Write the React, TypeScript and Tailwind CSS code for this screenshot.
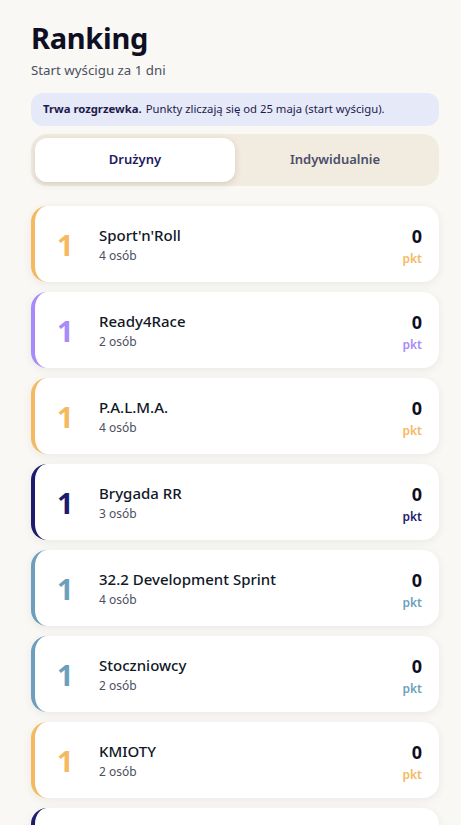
import React from "react";

type Team = { name: string; count: number; color: string };

const teams: Team[] = [
  { name: "Sport'n'Roll", count: 4, color: "orange" },
  { name: "Ready4Race", count: 2, color: "purple" },
  { name: "P.A.L.M.A.", count: 4, color: "orange" },
  { name: "Brygada RR", count: 3, color: "navy" },
  { name: "32.2 Development Sprint", count: 4, color: "steel" },
  { name: "Stoczniowcy", count: 2, color: "steel" },
  { name: "KMIOTY", count: 2, color: "orange" },
];

const styles: Record<string, { border: string; text: string }> = {
  orange: { border: "border-l-[#f5b961]", text: "text-[#f5b961]" },
  purple: { border: "border-l-[#a78bfa]", text: "text-[#a78bfa]" },
  navy: { border: "border-l-[#1e1b6e]", text: "text-[#1e1b6e]" },
  steel: { border: "border-l-[#6d9fbd]", text: "text-[#6d9fbd]" },
};

export default function App() {
  return (
    <div
      className="h-[825px] overflow-hidden bg-[#f9f8f5] pl-[31px] pr-[22px] pt-[18px]"
      style={{ fontFamily: '"Noto Sans", "Open Sans", sans-serif' }}
    >
      <h1 className="text-[29px] font-bold leading-[40px] text-[#0f0f23] tracking-[-0.3px]">Ranking</h1>
      <p className="mt-[3px] text-[13.3px] leading-[18px] text-[#4b5060]">Start wyścigu za 1 dni</p>

      <div className="mt-[14px] flex h-[33px] items-center rounded-xl bg-[#e5e9f8] px-[12px] text-[11.3px] text-[#1e1b4b]">
        <span className="font-bold">Trwa rozgrzewka.</span>
        <span className="ml-[4px]">Punkty zliczają się od 25 maja (start wyścigu).</span>
      </div>

      <div className="mt-[8px] flex h-[52px] rounded-2xl bg-[#f1ebe0] p-[4px]">
        <div className="flex flex-1 items-center justify-center rounded-xl bg-white text-[13px] font-semibold text-[#1e1b5e] shadow-[0_2px_6px_rgba(120,100,70,0.22)]">
          Drużyny
        </div>
        <div className="flex flex-1 items-center justify-center text-[13px] font-semibold text-[#4b4f6a]">
          Indywidualnie
        </div>
      </div>

      <div className="mt-[20px] flex flex-col gap-[10px]">
        {teams.map((t) => {
          const s = styles[t.color];
          return (
            <div
              key={t.name}
              className={`flex h-[76px] shrink-0 items-center rounded-2xl border-l-4 bg-white pl-[22px] pr-[17px] shadow-[0_2px_8px_rgba(60,50,30,0.08)] ${s.border}`}
            >
              <div className={`w-[42px] pt-[1px] text-[29px] font-bold leading-none ${s.text}`}>1</div>
              <div className="flex flex-1 flex-col">
                <div className="text-[15px] font-medium leading-[20px] text-[#111827]">{t.name}</div>
                <div className="mt-[3px] text-[12px] leading-[16px] text-[#4b5060]">{t.count} osób</div>
              </div>
              <div className="flex flex-col items-end pt-[4px]">
                <div className="text-[18px] font-bold leading-[22px] text-[#0f0f23]">0</div>
                <div className={`mt-[4px] text-[12px] font-semibold leading-[16px] ${s.text}`}>pkt</div>
              </div>
            </div>
          );
        })}
        <div className="h-[76px] shrink-0 rounded-2xl border-l-4 border-l-[#1e1b6e] bg-white shadow-[0_2px_8px_rgba(60,50,30,0.08)]" />
      </div>
    </div>
  );
}
